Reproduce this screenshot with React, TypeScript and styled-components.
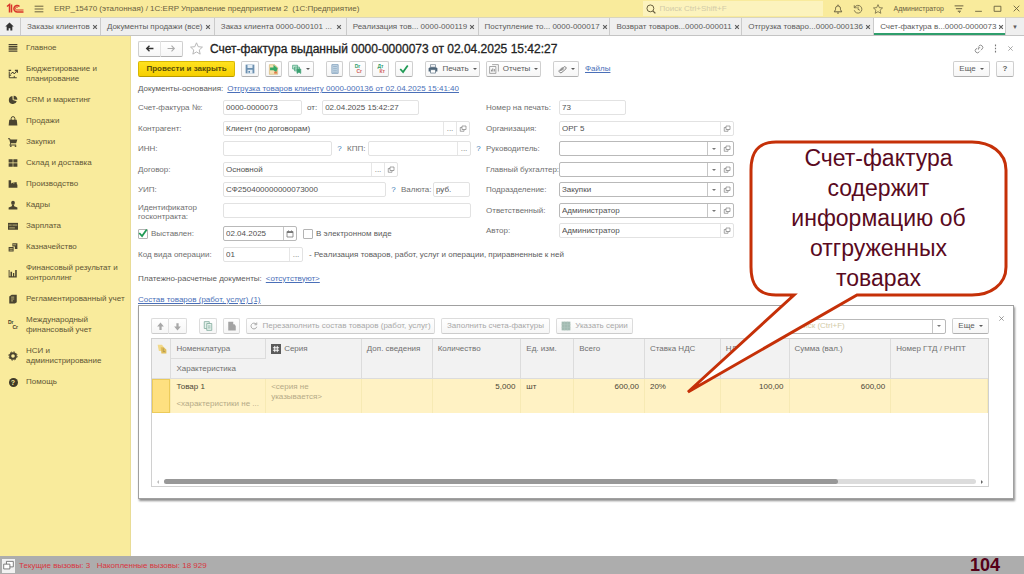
import React from 'react';
import styled, { createGlobalStyle } from 'styled-components';

const GlobalStyle = createGlobalStyle`
  *, *::before, *::after { box-sizing: border-box; }
  body {
    margin: 0;
    background: #fff;
    color: #5c5c5c;
    font: 8px/10px "Liberation Sans", Arial, sans-serif;
  }
  button, input { font: inherit; color: inherit; margin: 0; padding: 0; }
  button { cursor: pointer; }
`;

/* ---------- icons ---------- */

const S = { fill: 'none', stroke: 'currentColor', strokeWidth: 1.6 } as const;

const shapes: Record<string, React.ReactNode> = {
  home: <path d="M8 1 0.5 8H3v7h3.500v-4h3v4H13V8h2.500z" fill="currentColor" />,
  burger: <path d="M1 3.500h14M1 8h14M1 12.500h14" {...S} />,
  lines: <path d="M1 2.500h14M1 6h14M1 9.500h14M1 13h14" {...S} strokeWidth={2.2} />,
  plan: (
    <g {...S}>
      <path d="M2 4v10h12M2 10h3M10 14v-3" />
      <path d="m4 8 4-3 2 3 4-5" />
      <path d="M11 2h4v4M1 2h4" strokeWidth={2} />
    </g>
  ),
  pie: (
    <g fill="currentColor">
      <path d="M7 1.500A6.500 6.500 0 1 0 14 10L7.500 8z" />
      <path d="M9 1a6.500 6.500 0 0 1 6 6.500L9 7z" />
    </g>
  ),
  bag: (
    <g>
      <path d="M2 6h12l1 9H1z" fill="currentColor" />
      <path d="M5 7V4a3 3 0 0 1 6 0v3" {...S} />
    </g>
  ),
  cart: (
    <g fill="currentColor">
      <path d="M0 2h3l1 2h11l-2 6H5L4 12h9v1.500H2L3.500 10 2 3.500H0z" />
      <circle cx="4.500" cy="14.500" r="1.500" />
      <circle cx="12" cy="14.500" r="1.500" />
    </g>
  ),
  boxes: <path d="M1 2h6.500v5H1zM8.500 2H15v5H8.500zM1 8.500h6.500v5.500H1zM8.500 8.500H15V14H8.500z" fill="currentColor" />,
  factory: <path d="M1 14V2h4v5l4-2v3l1-1V5h4v3l1 1v5z" fill="currentColor" />,
  person: (
    <g fill="currentColor">
      <ellipse cx="8" cy="4.500" rx="3" ry="3.500" />
      <path d="M6.500 8h3l.5 2 5 2v3H1v-3l5-2z" />
    </g>
  ),
  card: (
    <g>
      <path d="M0 3h16v11H0z" fill="currentColor" />
      <path d="M1 6.500h5M7 6.500h8M2 11h9" stroke="#f9eb9c" strokeWidth="1" />
    </g>
  ),
  coins: (
    <g>
      <path d="M7 2h8v9h-4V7H7zM1 8h8v7H1z" fill="currentColor" />
      <path d="M8 4.500h5M2.500 10.500h5M2.500 13h5" stroke="#f9eb9c" strokeWidth="1" />
    </g>
  ),
  bars: <path d="M1 15V3h1.500v10H4V6h2.500v7H8V8h2v5h1.500V3H14v12z" fill="currentColor" />,
  book: (
    <g>
      <path d="M2 4l4-3h8v12l-3 2H2z" fill="currentColor" />
      <path d="M5 5h5M5 8h5M5 11h3" stroke="#f9eb9c" />
    </g>
  ),
  gear: (
    <g {...S}>
      <circle cx="8" cy="8" r="4.500" strokeWidth="3.200" />
      <circle cx="8" cy="8" r="6.600" strokeWidth="1.600" strokeDasharray="2.600 2.580" />
    </g>
  ),
  star: <path d="m8 1 2.100 4.800 5.200.5-3.900 3.500 1.100 5.100L8 12.200l-4.500 2.700 1.100-5.100L.7 6.300l5.200-.5z" {...S} strokeWidth={1.2} />,
  bell: <path d="M8 1v2M2 12.500 4 9c0-3 .5-6 4-6s4 3 4 6l2 3.500zM6.500 14.500h3" {...S} />,
  history: (
    <g {...S} strokeWidth={1.3}>
      <path d="M2.500 5.500A6.200 6.200 0 1 1 2 10M2 2v4h4" />
      <path d="M8 4v4.500l3 1.500" />
    </g>
  ),
  funnel: <path d="M1 3h14M3 7.500h10M6 11.500h5M8 12l1 2" {...S} />,
  minimize: <path d="M2 13h12" {...S} />,
  maximize: <path d="M2 4h12v9H2z" {...S} />,
  close: <path d="m3 3 10 10M13 3 3 13" {...S} />,
  closeBold: <path d="m3 3 10 10M13 3 3 13" {...S} strokeWidth={3} />,
  search: (
    <g {...S}>
      <circle cx="7" cy="7" r="5.500" />
      <path d="m11 11 4 4" strokeWidth={2.2} />
    </g>
  ),
  back: <path d="M15 8H3M8 3 3 8l5 5" {...S} strokeWidth={2.4} />,
  forward: <path d="M1 8h12M8 3l5 5-5 5" {...S} strokeWidth={2} />,
  up: <path d="M8 1 2 8h4v6h4V8h4z" fill="currentColor" />,
  down: <path d="M8 15 2 8h4V2h4v6h4z" fill="currentColor" />,
  link: <path d="M7 4l1-1a3.500 3.500 0 0 1 5 5l-2 2M9 12l-1 1a3.300 3.300 0 0 1-5-5l2-1M7 9V6h3" {...S} strokeWidth={1.3} />,
  dots: <path d="M8 1v3M8 6.500v3M8 12v3" {...S} strokeWidth={2} />,
  save: (
    <g>
      <path d="M1 1h14v14H1z" fill="#6c90b0" />
      <path d="M4 1.500h8v5H4zM4 9h8v6H4z" fill="#e3edf5" />
      <path d="M5.500 11h2.500v3H5.500z" fill="#5e87ab" />
    </g>
  ),
  post: (
    <g>
      <path d="M2 1h8l4 4v10H2z" fill="#f6e3b4" stroke="#d3b677" />
      <path d="M3 5h5V1l6 5-2 6-4-3H3z" fill="#35a866" />
      <path d="M9 11h4v3H9z" fill="#e07a48" />
    </g>
  ),
  copyTree: (
    <g stroke="#4aa37c" strokeWidth="1.200">
      <path d="M1 2h8v6H1zM4 5h8v6H4z" fill="#bfe6d2" />
      <path d="M8 8h6v7l-3-2-3 2z" fill="#36a06e" />
    </g>
  ),
  doc: (
    <g>
      <path d="M3 1h10v14H3z" fill="#c6d8e6" stroke="#86a4bf" strokeWidth="1.400" />
      <path d="M5 4h6M5 7h6M5 10h6M5 13h6" stroke="#7f9fbc" />
    </g>
  ),
  check: <path d="m2 8 4.500 5L14 2.500" fill="none" stroke="#1f9a55" strokeWidth="2.800" />,
  printer: (
    <g>
      <path d="M4 1h8v4H4z" fill="#fff" stroke="#5d6f7f" />
      <path d="M3 5h10l2 2v5H1V7z" fill="#4e6579" />
      <path d="M4 9h8v5.500H4z" fill="#fff" stroke="#4e6579" />
    </g>
  ),
  report: (
    <g fill="none" stroke="#8a8a8a" strokeWidth="1.200">
      <path d="M5 1h10v11M1 4h10v11H1z" />
      <path d="M4 12V9M6 12V7M8.500 12V8" strokeWidth="1.500" />
    </g>
  ),
  clip: <path d="m3 11 7-7a2.500 2.500 0 0 1 4 3l-7 6a3 3 0 0 1-5-3l6-6M6 10l5-4" {...S} strokeWidth={1.6} />,
  open: <path d="M6 2h8v7H6zM6 5H2.500v7.500H10V9" {...S} strokeWidth={1.3} />,
  calendar: (
    <g>
      <path d="M2 3h12v11H2z" {...S} />
      <path d="M2 3h12v3H2zM4 1h2v3H4zM10 1h2v3h-2z" fill="currentColor" />
    </g>
  ),
  copy: (
    <g fill="#e6f2ed" stroke="#84ac9f" strokeWidth="1.300">
      <path d="M2 1h8v11H2z" />
      <path d="M6 4h8v11H6z" />
      <path d="M8 8h4M8 11h4" />
    </g>
  ),
  paste: <path d="M2 1h8v4h2l2 3v7H2z" fill="#a3a3a3" />,
  refresh: <path d="M13.500 9.500A5.800 5.800 0 1 1 12 4M13.500 1v4.500H9" {...S} strokeWidth={2} />,
  grid: (
    <g>
      <path d="M1 1h14v14H1z" fill="#a3bbb2" />
      <path d="M1 5.500h14M1 10.500h14M5.500 1v14M10.500 1v14" stroke="#b1c6be" strokeWidth=".800" />
    </g>
  ),
  hash: (
    <g>
      <path d="M0 0h16v16H0z" fill="#5a5a5a" />
      <path d="M6 3v10M10 3v10M3 6h10M3 10h10" stroke="#fff" strokeWidth="1.500" />
    </g>
  ),
  marker: (
    <g>
      <path d="M1 1h7l3 4v6H3z" fill="#f2d98a" />
      <path d="M6 5h5l4 4v6H7z" fill="#e0bd5a" />
      <path d="M10 7v5h3" stroke="#9a8a55" fill="none" />
    </g>
  ),
  windows: (
    <g fill="#fff" stroke="#666" strokeWidth="1.200">
      <path d="M5 2h10v8H5z" />
      <path d="M1 6h9v7H1z" />
    </g>
  ),
};

const Svg = styled.svg<{ $size: number; $color?: string }>`
  flex: none;
  display: block;
  width: ${(p) => p.$size}px;
  height: ${(p) => p.$size}px;
  color: ${(p) => p.$color ?? 'inherit'};
`;

const Icon = ({ name, size = 10, color }: { name: string; size?: number; color?: string }) => (
  <Svg viewBox="0 0 16 16" $size={size} $color={color} aria-hidden="true">
    {shapes[name]}
  </Svg>
);

/* ---------- frame ---------- */

const Page = styled.div`
  position: relative;
  display: flex;
  flex-direction: column;
  min-height: 100vh;
`;

const TitleBar = styled.header`
  display: flex;
  align-items: center;
  gap: 10px;
  height: 17px;
  padding: 0 3px 0 6px;
  background: #f9eb9c;
  color: #6a6140;
`;

const Logo = styled.svg`
  flex: none;
  width: 18px;
  height: 11px;
`;

const AppName = styled.span`
  flex: 1;
  white-space: nowrap;
`;

const SearchBox = styled.label`
  display: flex;
  align-items: center;
  gap: 3px;
  width: 180px;
  height: 15px;
  padding-left: 3px;
  background: #fcf3bd;
`;

const BareInput = styled.input`
  flex: 1;
  min-width: 0;
  width: 100%;
  border: 0;
  outline: 0;
  background: transparent;
  &::placeholder { color: #d2cba8; opacity: 1; }
`;

const IconButton = styled.button`
  display: flex;
  align-items: center;
  justify-content: center;
  border: 0;
  background: none;
`;

const UserName = styled.span`
  font-size: 7px;
`;

const TabBar = styled.nav`
  display: flex;
  height: 19px;
  background: #efefef;
  border-top: 1px solid #d9d5bf;
  border-bottom: 1px solid #c4c4c4;
`;

const HomeTab = styled.button`
  display: flex;
  align-items: center;
  justify-content: center;
  width: 21px;
  border: 0;
  border-right: 1px solid #cbcbcb;
  background: none;
  color: #333;
`;

const Tab = styled.div<{ $grow: number; $active?: boolean }>`
  flex: ${(p) => p.$grow} 1 ${(p) => p.$grow}px;
  min-width: 0;
  display: flex;
  align-items: center;
  justify-content: space-between;
  gap: 2px;
  padding: 0 4px 0 6px;
  border-right: 1px solid #cbcbcb;
  background: ${(p) => (p.$active ? '#fff' : 'transparent')};
  box-shadow: ${(p) => (p.$active ? 'inset 0 -2px #2f9e6c' : 'none')};
  white-space: nowrap;
`;

const TabMenu = styled.button`
  width: 18px;
  border: 0;
  background: none;
  font-size: 6px;
`;

const Body = styled.div`
  flex: 1;
  display: flex;
`;

const Sidebar = styled.nav`
  width: 131px;
  flex: none;
  padding: 1px 0 0 8px;
  background: #f9eb9c;
  border-right: 1px solid #e9dc96;
`;

const NavItem = styled.a`
  display: flex;
  align-items: center;
  gap: 8px;
  padding: 6px 0 5px;
  color: #5f5635;
  text-decoration: none;
  white-space: pre;
`;

const NavGlyph = styled.span`
  width: 10px;
  display: flex;
  justify-content: center;
  color: #4a4430;
`;

const DrCr = styled.span<{ $tone?: 'dark' | 'green' }>`
  display: grid;
  width: 10px;
  font-size: 5px;
  line-height: 5px;
  font-weight: bold;
  color: ${(p) => (p.$tone === 'dark' ? '#3f3a28' : '#2f9e6c')};
  & > span:last-child {
    text-align: right;
    color: ${(p) => (p.$tone === 'dark' ? '#3f3a28' : '#d0625c')};
  }
`;

const HelpBadge = styled.span`
  width: 9px;
  height: 9px;
  border-radius: 50%;
  background: #3f3a28;
  color: #f9eb9c;
  font-weight: bold;
  font-size: 7px;
  line-height: 9px;
  text-align: center;
`;

const Main = styled.main`
  flex: 1;
  min-width: 0;
  padding: 0 10px 8px 7px;
`;

const StatusBar = styled.footer`
  display: flex;
  align-items: center;
  gap: 4px;
  height: 18px;
  padding: 1px 24px 0 2px;
  background: #adadad;
  color: #d93540;
`;

const StatusButton = styled.button`
  display: flex;
  align-items: center;
  justify-content: center;
  width: 13px;
  height: 14px;
  border: 0;
  background: #f2f2f2;
`;

const StatusText = styled.span`
  flex: 1;
  white-space: pre;
`;

const PageNumber = styled.span`
  font-size: 18px;
  line-height: 17px;
  font-weight: bold;
  color: #560018;
`;

/* ---------- document header ---------- */

const Row = styled.div<{ $gap?: number; $height?: number; $end?: boolean }>`
  display: flex;
  align-items: ${(p) => (p.$end ? 'flex-end' : 'center')};
  gap: ${(p) => p.$gap ?? 6}px;
  min-height: ${(p) => p.$height ?? 15}px;
`;

const Spacer = styled.span`
  flex: 1;
`;

const Group = styled.div`
  display: flex;
  gap: 6px;
  margin-right: 6px;
`;

const Title = styled.h1`
  flex: 1;
  margin: 0;
  font-size: 12px;
  line-height: 14px;
  font-weight: normal;
  color: #222;
  -webkit-text-stroke: 0.3px #222;
  white-space: nowrap;
`;

const Button = styled.button<{ $width?: number; $primary?: boolean; $muted?: boolean }>`
  display: flex;
  align-items: center;
  justify-content: center;
  gap: 4px;
  flex: none;
  width: ${(p) => (p.$width ? p.$width + 'px' : 'auto')};
  height: 16px;
  padding: 0 3px;
  border: 1px solid ${(p) => (p.$primary ? '#d9b800' : p.$muted ? '#dcdcdc' : '#cfcfcf')};
  border-bottom-color: ${(p) => (p.$primary ? '#b79a00' : p.$muted ? '#cccccc' : '#b0b0b0')};
  border-radius: 2px;
  background: ${(p) => (p.$primary ? 'linear-gradient(#ffe21f, #f6cf00)' : 'linear-gradient(#fff, #f6f6f6)')};
  color: ${(p) => (p.$primary ? '#5a4e08' : p.$muted ? '#a8a8a8' : '#5a5a5a')};
  font-weight: ${(p) => (p.$primary ? 'bold' : 'normal')};
  white-space: nowrap;
`;

const Joined = styled.div`
  display: flex;
  & > button:first-child { border-radius: 2px 0 0 2px; border-right-color: #e2e2e2; }
  & > button:last-child { border-radius: 0 2px 2px 0; border-left: 0; }
`;

const Caret = styled.i`
  flex: none;
  border: 2px solid transparent;
  border-top-color: currentColor;
  border-bottom: 0;
`;

const Link = styled.a`
  color: #4a6fb8;
  text-decoration: underline;
  white-space: nowrap;
`;

const DocsRow = styled(Row)`
  margin: 6px 0 5px;
`;

/* ---------- form ---------- */

const Form = styled.div`
  display: grid;
  grid-template-columns: 348px 248px;
`;

const Fields = styled.div`
  min-width: 0;
`;

const FieldRow = styled.div`
  display: flex;
  align-items: flex-start;
  min-height: 15px;
  line-height: 15px;
  margin-bottom: 5px;
  white-space: nowrap;
  &:nth-child(odd) { margin-bottom: 6px; }
`;

const FieldLabel = styled.label<{ $width: number; $tall?: boolean }>`
  flex: none;
  width: ${(p) => p.$width}px;
  white-space: pre;
  line-height: ${(p) => (p.$tall ? 9 : 15)}px;
  color: #6f6f6f;
`;

const FieldBox = styled.div<{ $width: number; $strong?: boolean }>`
  flex: none;
  display: flex;
  width: ${(p) => p.$width}px;
  height: 15px;
  border: 1px solid ${(p) => (p.$strong ? '#b9b9b9' : '#e2e2e2')};
  border-radius: 2px;
  background: #fff;
  & > input { padding-left: 2px; color: #505050; }
  & > button {
    width: 13px;
    border-left: 1px solid ${(p) => (p.$strong ? '#c6c6c6' : '#e6e6e6')};
    color: #777;
  }
`;

const Hint = styled.a`
  width: 15px;
  text-align: center;
  color: #3c7db5;
  text-decoration: none;
`;

const Inline = styled.span<{ $pad: number }>`
  padding: 0 ${(p) => p.$pad}px;
`;

const Tick = styled.input`
  appearance: none;
  flex: none;
  width: 10px;
  height: 10px;
  margin: 3px 3px 0 0;
  border: 1px solid #b4b4b4;
  border-radius: 1px;
  background: #fff;
`;

const TickWrap = styled.span`
  position: relative;
  display: flex;
  & > svg {
    position: absolute;
    left: 0;
    top: 2px;
    pointer-events: none;
  }
`;

type FieldProps = { id: string; width: number; value?: string; strong?: boolean; buttons?: string[] };

const Field = ({ id, width, value = '', strong, buttons = [] }: FieldProps) => (
  <FieldBox $width={width} $strong={strong}>
    <BareInput id={id} defaultValue={value} />
    {buttons.map((b) => (
      <IconButton key={b} aria-label={b}>
        {b === 'caret' ? <Caret /> : b === 'more' ? '...' : <Icon name={b} size={8} />}
      </IconButton>
    ))}
  </FieldBox>
);

const rightFields: (FieldProps & { label: string })[] = [
  { id: 'printNo', label: 'Номер на печать:', width: 67, value: '73' },
  { id: 'org', label: 'Организация:', width: 175, value: 'ОРГ 5', buttons: ['open'] },
  { id: 'head', label: 'Руководитель:', width: 175, strong: true, buttons: ['caret', 'open'] },
  { id: 'accountant', label: 'Главный бухгалтер:', width: 175, strong: true, buttons: ['caret', 'open'] },
  { id: 'unit', label: 'Подразделение:', width: 175, value: 'Закупки', strong: true, buttons: ['caret', 'open'] },
  { id: 'resp', label: 'Ответственный:', width: 175, value: 'Администратор', strong: true, buttons: ['caret', 'open'] },
  { id: 'author', label: 'Автор:', width: 175, value: 'Администратор', buttons: ['open'] },
];

/* ---------- goods panel ---------- */

const Panel = styled.section`
  position: relative;
  padding: 12px 24px 11px 12px;
  border: 1px solid #a0a0a0;
  background: #fff;
  box-shadow: 1px 2px 2px #8f8f8f;
`;

const PanelClose = styled(IconButton)`
  position: absolute;
  top: 9px;
  right: 8px;
  color: #777;
`;

const TableFrame = styled.div`
  display: flex;
  flex-direction: column;
  min-height: 149px;
  margin-top: 4px;
  border: 1px solid #d0d0d0;
`;

const Table = styled.table`
  width: 100%;
  table-layout: fixed;
  border-collapse: collapse;
  line-height: 10px;
`;

const Th = styled.th`
  height: 19px;
  padding: 5px 0 4px 5px;
  border-right: 1px solid #dcdcdc;
  border-bottom: 1px solid #dcdcdc;
  background: #f2f2f2;
  color: #707070;
  font-weight: normal;
  text-align: left;
  vertical-align: top;
  white-space: nowrap;
  &:last-child { border-right: 0; }
`;

const Td = styled.td<{ $right?: boolean; $muted?: boolean; $mark?: boolean }>`
  height: 17px;
  padding: 3px 5px 3px 5px;
  border-right: 1px solid #f7eab4;
  background: ${(p) => (p.$mark ? '#fee080' : '#fff2c4')};
  box-shadow: ${(p) => (p.$mark ? 'inset 0 0 0 1px #eccb5a' : 'none')};
  color: ${(p) => (p.$muted ? '#b5aa87' : '#4a4636')};
  text-align: ${(p) => (p.$right ? 'right' : 'left')};
  vertical-align: top;
  white-space: ${(p) => (p.$muted ? 'pre' : 'nowrap')};
`;

const HeadIcon = styled.span`
  display: flex;
  align-items: center;
  gap: 3px;
`;

const ScrollRow = styled.div`
  display: flex;
  align-items: center;
  gap: 5px;
  margin-top: auto;
  padding: 0 5px 2px;
  color: #999;
`;

const ScrollTrack = styled.div`
  flex: 1;
  height: 5px;
  border-radius: 3px;
  background: #dcdcdc;
`;

const ScrollThumb = styled.div`
  width: 83%;
  height: 5px;
  border-radius: 3px;
  background: #989898;
`;

const ScrollArrow = styled.i<{ $right?: boolean }>`
  border: 2px solid transparent;
  ${(p) => (p.$right ? 'border-left-color: #666; border-right: 0;' : 'border-right-color: #bbb; border-left: 0;')}
`;

/* ---------- callout ---------- */

const Callout = styled.aside`
  position: absolute;
  top: 138px;
  right: 14px;
  width: 328px;
  height: 260px;
  pointer-events: none;
`;

const CalloutShape = styled.svg`
  display: block;
  width: 328px;
  height: 260px;
`;

const CalloutText = styled.p`
  position: absolute;
  top: 5px;
  left: 69px;
  width: 255px;
  margin: 0;
  font-size: 23px;
  line-height: 30px;
  text-align: center;
  color: #5a0a1e;
`;

/* ---------- data ---------- */

const tabs = [
  { text: 'Заказы клиентов', grow: 80 },
  { text: 'Документы продажи (все)', grow: 114 },
  { text: 'Заказ клиента 0000-000101 ...', grow: 132 },
  { text: 'Реализация тов... 0000-000119', grow: 132 },
  { text: 'Поступление то... 0000-000017', grow: 132 },
  { text: 'Возврат товаров...0000-000011', grow: 132 },
  { text: 'Отгрузка товаро...0000-000136', grow: 132 },
  { text: 'Счет-фактура в...0000-0000073', grow: 132 },
];

const navItems: [string, string][] = [
  ['lines', 'Главное'],
  ['plan', 'Бюджетирование и\nпланирование'],
  ['pie', 'CRM и маркетинг'],
  ['bag', 'Продажи'],
  ['cart', 'Закупки'],
  ['boxes', 'Склад и доставка'],
  ['factory', 'Производство'],
  ['person', 'Кадры'],
  ['card', 'Зарплата'],
  ['coins', 'Казначейство'],
  ['bars', 'Финансовый результат и\nконтроллинг'],
  ['book', 'Регламентированный учет'],
  ['drcr', 'Международный\nфинансовый учет'],
  ['gear', 'НСИ и\nадминистрирование'],
  ['help', 'Помощь'],
];

const columns = [19, 95, 96, 71, 89, 53, 71, 76, 69, 102, 97];

const DebitCredit = ({ tone, a, b }: { tone?: 'dark' | 'green'; a: string; b: string }) => (
  <DrCr $tone={tone}>
    <span>{a}</span>
    <span>{b}</span>
  </DrCr>
);

const windowButtons = ['funnel', 'minimize', 'maximize', 'close'];

export default function App() {
  return (
    <Page>
      <GlobalStyle />
      <TitleBar>
        <Logo viewBox="0 0 36 22" aria-label="1C">
          <g fill="none" stroke="#d8352a" strokeWidth="3">
            <path d="M2 7l5-4v16M11 19V3" />
            <path d="M27 7a6.500 6.500 0 1 0-5 11h13" />
            <path d="M24 9a3 3 0 1 0-2 5h13" strokeWidth="2" />
          </g>
        </Logo>
        <IconButton aria-label="Меню">
          <Icon name="burger" />
        </IconButton>
        <AppName>ERP_15470 (эталонная) / 1С:ERP Управление предприятием 2 &nbsp;(1С:Предприятие)</AppName>
        <SearchBox>
          <Icon name="search" />
          <BareInput placeholder="Поиск Ctrl+Shift+F" aria-label="Поиск" />
        </SearchBox>
        {['bell', 'history', 'star'].map((n) => (
          <IconButton key={n} aria-label={n}>
            <Icon name={n} />
          </IconButton>
        ))}
        <UserName>Администратор</UserName>
        {windowButtons.map((n) => (
          <IconButton key={n} aria-label={n}>
            <Icon name={n} size={n === 'funnel' ? 10 : 9} />
          </IconButton>
        ))}
      </TitleBar>

      <TabBar>
        <HomeTab aria-label="Начальная страница">
          <Icon name="home" size={9} />
        </HomeTab>
        {tabs.map((t, i) => (
          <Tab key={t.text} $grow={t.grow} $active={i === tabs.length - 1}>
            <span>{t.text}</span>
            <IconButton aria-label="Закрыть">
              <Icon name="closeBold" size={6} />
            </IconButton>
          </Tab>
        ))}
        <TabMenu aria-label="Список вкладок">▼</TabMenu>
      </TabBar>

      <Body>
        <Sidebar>
          {navItems.map(([icon, text]) => (
            <NavItem key={text} href="#">
              <NavGlyph>
                {icon === 'drcr' ? (
                  <DebitCredit tone="dark" a="Dr" b="Cr" />
                ) : icon === 'help' ? (
                  <HelpBadge>?</HelpBadge>
                ) : (
                  <Icon name={icon} />
                )}
              </NavGlyph>
              {text}
            </NavItem>
          ))}
        </Sidebar>

        <Main>
          <Row $height={25} $gap={7}>
            <Joined>
              <Button $width={23} aria-label="Назад">
                <Icon name="back" size={9} color="#333" />
              </Button>
              <Button $width={22} aria-label="Вперед">
                <Icon name="forward" size={9} color="#aaa" />
              </Button>
            </Joined>
            <Icon name="star" size={13} color="#b5b5b5" />
            <Title>Счет-фактура выданный 0000-0000073 от 02.04.2025 15:42:27</Title>
            <Icon name="link" color="#777" />
            <Icon name="dots" color="#777" size={9} />
            <Icon name="close" color="#888" size={7} />
          </Row>

          <Row>
            <Group>
              <Button $primary $width={97}>Провести и закрыть</Button>
              <Button $width={18} aria-label="Записать"><Icon name="save" /></Button>
              <Button $width={17} aria-label="Провести"><Icon name="post" size={11} /></Button>
              <Button $width={26} aria-label="Создать на основании"><Icon name="copyTree" /><Caret /></Button>
            </Group>
            <Group>
              <Button $width={17} aria-label="Реестр"><Icon name="doc" /></Button>
              <Button $width={17} aria-label="Проводки Dr Cr"><DebitCredit a="Dr" b="Cr" /></Button>
              <Button $width={17} aria-label="Проводки Дт Кт"><DebitCredit a="Дт" b="Кт" /></Button>
              <Button $width={18} aria-label="Проверить"><Icon name="check" /></Button>
            </Group>
            <Group>
              <Button $width={55}><Icon name="printer" />Печать<Caret /></Button>
              <Button $width={55}><Icon name="report" />Отчеты<Caret /></Button>
            </Group>
            <Button $width={26} aria-label="Присоединенные файлы"><Icon name="clip" color="#777" size={9} /><Caret /></Button>
            <Link href="#">Файлы</Link>
            <Spacer />
            <Button $width={37}>Еще<Caret /></Button>
            <Button $width={18}><b>?</b></Button>
          </Row>

          <DocsRow $gap={4} $height={12}>
            <span>Документы-основания:</span>
            <Link href="#">Отгрузка товаров клиенту 0000-000136 от 02.04.2025 15:41:40</Link>
          </DocsRow>

          <Form>
            <Fields>
              <FieldRow>
                <FieldLabel $width={85} htmlFor="number">Счет-фактура №:</FieldLabel>
                <Field id="number" width={79} value="0000-0000073" />
                <Inline as="label" htmlFor="date" $pad={5}>от:</Inline>
                <Field id="date" width={97} value="02.04.2025 15:42:27" />
              </FieldRow>
              <FieldRow>
                <FieldLabel $width={85} htmlFor="partner">Контрагент:</FieldLabel>
                <Field id="partner" width={247} value="Клиент (по договорам)" buttons={['more', 'open']} />
              </FieldRow>
              <FieldRow>
                <FieldLabel $width={85} htmlFor="inn">ИНН:</FieldLabel>
                <Field id="inn" width={109} />
                <Hint href="#">?</Hint>
                <FieldLabel $width={21} htmlFor="kpp">КПП:</FieldLabel>
                <Field id="kpp" width={103} buttons={['more']} />
                <Hint href="#">?</Hint>
              </FieldRow>
              <FieldRow>
                <FieldLabel $width={85} htmlFor="contract">Договор:</FieldLabel>
                <Field id="contract" width={175} value="Основной" buttons={['more', 'open']} />
              </FieldRow>
              <FieldRow>
                <FieldLabel $width={85} htmlFor="uip">УИП:</FieldLabel>
                <Field id="uip" width={163} value="СФ250400000000073000" />
                <Hint href="#">?</Hint>
                <FieldLabel $width={32} htmlFor="currency">Валюта:</FieldLabel>
                <Field id="currency" width={37} value="руб." />
              </FieldRow>
              <FieldRow>
                <FieldLabel $width={85} $tall htmlFor="gov">{'Идентификатор\nгосконтракта:'}</FieldLabel>
                <Field id="gov" width={248} />
              </FieldRow>
              <FieldRow>
                <FieldLabel as="div" $width={85}>
                  <TickWrap>
                    <Tick type="checkbox" id="issued" defaultChecked />
                    <Icon name="check" />
                    <label htmlFor="issued">Выставлен:</label>
                  </TickWrap>
                </FieldLabel>
                <Field id="issuedDate" width={74} value="02.04.2025" strong buttons={['calendar']} />
                <Inline $pad={6}>
                  <TickWrap>
                    <Tick type="checkbox" id="electronic" />
                    <label htmlFor="electronic">В электронном виде</label>
                  </TickWrap>
                </Inline>
              </FieldRow>
              <FieldRow>
                <FieldLabel $width={85} htmlFor="code">Код вида операции:</FieldLabel>
                <Field id="code" width={80} value="01" buttons={['more']} />
                <Inline $pad={6}>- Реализация товаров, работ, услуг и операции, приравненные к ней</Inline>
              </FieldRow>
            </Fields>

            <Fields>
              {rightFields.map(({ label, ...f }) => (
                <FieldRow key={f.id}>
                  <FieldLabel $width={73} htmlFor={f.id}>{label}</FieldLabel>
                  <Field {...f} />
                </FieldRow>
              ))}
            </Fields>
          </Form>

          <Row $gap={4} $height={23}>
            <span>Платежно-расчетные документы:</span>
            <Link href="#">&lt;отсутствуют&gt;</Link>
          </Row>
          <Row $end>
            <Link href="#">Состав товаров (работ, услуг) (1)</Link>
          </Row>

          <Panel>
            <PanelClose aria-label="Закрыть">
              <Icon name="close" size={7} />
            </PanelClose>
            <Row>
              <Group>
                <Joined>
                  <Button $muted $width={18} aria-label="Вверх"><Icon name="up" size={9} /></Button>
                  <Button $muted $width={18} aria-label="Вниз"><Icon name="down" size={9} /></Button>
                </Joined>
              </Group>
              <Button $muted $width={18} aria-label="Копировать"><Icon name="copy" /></Button>
              <Button $muted $width={17} aria-label="Вставить"><Icon name="paste" /></Button>
              <Button $muted $width={189}><Icon name="refresh" size={8} />Перезаполнить состав товаров (работ, услуг)</Button>
              <Button $muted $width={109}>Заполнить счета-фактуры</Button>
              <Button $muted $width={77}><Icon name="grid" />Указать серии</Button>
              <Spacer />
              <FieldBox $width={156} $strong>
                <BareInput placeholder="Поиск (Ctrl+F)" aria-label="Поиск в таблице" />
                <IconButton aria-label="Варианты поиска"><Caret /></IconButton>
              </FieldBox>
              <Button $width={37}>Еще<Caret /></Button>
            </Row>

            <TableFrame>
              <Table>
                <colgroup>
                  {columns.map((w, i) => (
                    <col key={i} style={{ width: `${(w / 838) * 100}%` }} />
                  ))}
                </colgroup>
                <thead>
                  <tr>
                    <Th rowSpan={2}><Icon name="marker" /></Th>
                    <Th>Номенклатура</Th>
                    <Th rowSpan={2}><HeadIcon><Icon name="hash" />Серия</HeadIcon></Th>
                    <Th rowSpan={2}>Доп. сведения</Th>
                    <Th rowSpan={2}>Количество</Th>
                    <Th rowSpan={2}>Ед. изм.</Th>
                    <Th rowSpan={2}>Всего</Th>
                    <Th rowSpan={2}>Ставка НДС</Th>
                    <Th rowSpan={2}>НДС</Th>
                    <Th rowSpan={2}>Сумма (вал.)</Th>
                    <Th rowSpan={2}>Номер ГТД / РНПТ</Th>
                  </tr>
                  <tr>
                    <Th>Характеристика</Th>
                  </tr>
                </thead>
                <tbody>
                  <tr>
                    <Td rowSpan={2} $mark />
                    <Td>Товар 1</Td>
                    <Td rowSpan={2} $muted>{'<серия не\nуказывается>'}</Td>
                    <Td rowSpan={2} />
                    <Td rowSpan={2} $right>5,000</Td>
                    <Td rowSpan={2}>шт</Td>
                    <Td rowSpan={2} $right>600,00</Td>
                    <Td rowSpan={2}>20%</Td>
                    <Td rowSpan={2} $right>100,00</Td>
                    <Td rowSpan={2} $right>600,00</Td>
                    <Td rowSpan={2} />
                  </tr>
                  <tr>
                    <Td $muted>&lt;характеристики не ...</Td>
                  </tr>
                </tbody>
              </Table>
              <ScrollRow>
                <ScrollArrow />
                <ScrollTrack>
                  <ScrollThumb />
                </ScrollTrack>
                <ScrollArrow $right />
              </ScrollRow>
            </TableFrame>
          </Panel>
        </Main>
      </Body>

      <StatusBar>
        <StatusButton aria-label="Окна">
          <Icon name="windows" size={11} />
        </StatusButton>
        <StatusText>{'Текущие вызовы: 3   Накопленные вызовы: 18 929'}</StatusText>
        <PageNumber>104</PageNumber>
      </StatusBar>

      <Callout>
        <CalloutShape viewBox="0 0 328 260" aria-hidden="true">
          <path
            d="M94 4H290C308 4 324 14 324 32V129C324 147 308 157 290 157H175L6 254 112 157H94C76 157 69 147 69 129V32C69 14 76 4 94 4Z"
            fill="#fff"
            stroke="#c53008"
            strokeWidth="3"
          />
        </CalloutShape>
        <CalloutText>
          Счет-фактура
          <br />
          содержит
          <br />
          информацию об
          <br />
          отгруженных
          <br />
          товарах
        </CalloutText>
      </Callout>
    </Page>
  );
}
